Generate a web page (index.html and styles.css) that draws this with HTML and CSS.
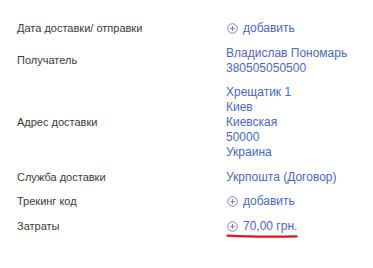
FILE: index.html
```html
<html>
<head>
    <title>Доставка</title>
    <link rel="stylesheet" href="styles.css">
</head>
<body>
    <div class="details">
        <div class="label">Дата доставки/ отправки</div>
        <div class="value">
            <a class="add-link" href="#">
                <svg class="plus" viewBox="0 0 12 12"><circle cx="6" cy="6" r="5.2"/><path d="M6 3.3v5.4M3.3 6h5.4"/></svg>
                добавить
            </a>
        </div>

        <div class="label">Получатель</div>
        <div class="value">Владислав Пономарь<br>380505050500</div>

        <div class="label">Адрес доставки</div>
        <div class="value">Хрещатик 1<br>Киев<br>Киевская<br>50000<br>Украина</div>

        <div class="label">Служба доставки</div>
        <div class="value">Укрпошта (Договор)</div>

        <div class="label">Трекинг код</div>
        <div class="value">
            <a class="add-link" href="#">
                <svg class="plus" viewBox="0 0 12 12"><circle cx="6" cy="6" r="5.2"/><path d="M6 3.3v5.4M3.3 6h5.4"/></svg>
                добавить
            </a>
        </div>

        <div class="label">Затраты</div>
        <div class="value">
            <a class="add-link cost" href="#">
                <svg class="plus" viewBox="0 0 12 12"><circle cx="6" cy="6" r="5.2"/><path d="M6 3.3v5.4M3.3 6h5.4"/></svg>
                70,00 грн.
                <svg class="scribble" viewBox="0 0 72 6"><path d="M1.5 2.6C20 3.6 45 3.8 70.5 3.4"/></svg>
            </a>
        </div>
    </div>
</body>
</html>
```

FILE: styles.css
```css
body {
    margin: 0;
    padding: 21px 0 0 17px;
    background-color: #ffffff;
    font-family: "Liberation Sans", Arial, sans-serif;
}

.details {
    display: grid;
    grid-template-columns: 209px auto;
    row-gap: 9.5px;
    align-items: center;
}

.label {
    font-size: 11px;
    line-height: 15px;
    color: #3a3a3a;
}

.value {
    font-size: 12px;
    line-height: 15px;
    color: #4c67bd;
}

.add-link {
    display: inline-flex;
    align-items: center;
    gap: 5px;
    color: #4c67bd;
    text-decoration: none;
    position: relative;
}

.plus {
    width: 11px;
    height: 11px;
    margin-left: 1px;
    fill: none;
    stroke: #7479ab;
    stroke-width: 1;
}

.scribble {
    position: absolute;
    left: 0;
    top: 14px;
    width: 72px;
    height: 6px;
    fill: none;
    stroke: #e5121b;
    stroke-width: 2.4;
    stroke-linecap: round;
}
```
